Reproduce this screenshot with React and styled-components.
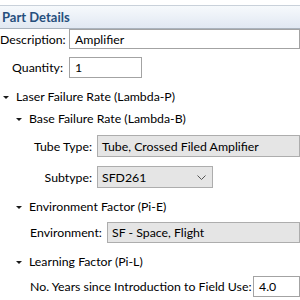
import React from "react";
import styled, { createGlobalStyle } from "styled-components";

const Global = createGlobalStyle`
  html, body { margin: 0; padding: 0; background: #ffffff; overflow: hidden; }
  body { font-family: "Segoe UI", Lato, "Noto Sans", sans-serif; font-size: 12.3px; color: #000; }
`;

const Page = styled.div`
  width: 300px;
  height: 300px;
  padding-top: 5px;
  box-sizing: border-box;
  overflow: hidden;
`;

const Header = styled.div`
  height: 24px;
  box-sizing: border-box;
  border-top: 1px solid #c9d1da;
  border-bottom: 1px solid #aab3bd;
  background: linear-gradient(#f6f9fc, #e1e8f2);
  display: flex;
  align-items: center;
  padding-left: 2px;
  font-weight: 700;
  font-size: 13px;
  color: #264f7d;
`;

const Row = styled.div`
  display: flex;
  align-items: center;
  margin-top: ${(p) => p.$mt || 0}px;
  margin-left: ${(p) => p.$indent || 0}px;
  height: ${(p) => p.$h || 21}px;
`;

const Label = styled.label`
  width: ${(p) => p.$w}px;
  text-align: ${(p) => (p.$left ? "left" : "right")};
  white-space: nowrap;
  flex: none;
`;

const TextBox = styled.div`
  box-sizing: border-box;
  height: 100%;
  margin-left: ${(p) => p.$gap || 6}px;
  width: ${(p) => (p.$w ? `${p.$w}px` : "auto")};
  flex: ${(p) => (p.$w ? "none" : "1 0 auto")};
  border: 1px solid #a3a3a3;
  background: #fff;
  display: flex;
  align-items: center;
  padding-left: 5px;
  white-space: nowrap;
`;

const Combo = styled.div`
  box-sizing: border-box;
  height: 100%;
  margin-left: ${(p) => p.$gap || 5}px;
  width: ${(p) => (p.$w ? `${p.$w}px` : "auto")};
  flex: ${(p) => (p.$w ? "none" : "1 0 auto")};
  border: 1px solid #adadad;
  background: #e5e5e5;
  display: flex;
  align-items: center;
  justify-content: space-between;
  padding: 0 6px 0 4px;
  white-space: nowrap;
`;

const Heading = styled.div`
  display: flex;
  align-items: center;
  height: 18px;
  margin-top: ${(p) => p.$mt || 0}px;
  padding-left: ${(p) => p.$indent}px;
  white-space: nowrap;
`;

const Triangle = styled.span`
  width: 0;
  height: 0;
  border-left: 3px solid transparent;
  border-right: 3px solid transparent;
  border-top: 3px solid #1a1a1a;
  margin-top: 3px;
  margin-right: 7px;
`;

const Chevron = () => (
  <svg width="9" height="5" viewBox="0 0 9 5">
    <path d="M0.5 0.5 L4.5 4.5 L8.5 0.5" fill="none" stroke="#555" strokeWidth="1" />
  </svg>
);

export default function App() {
  return (
    <Page>
      <Global />
      <Header>Part Details</Header>
      <Row $h={20}>
        <Label $w={63}>Description:</Label>
        <TextBox>Amplifier</TextBox>
      </Row>
      <Row $mt={8}>
        <Label $w={63}>Quantity:</Label>
        <TextBox $w={73}>1</TextBox>
      </Row>
      <Heading $mt={9} $indent={3}>
        <Triangle />
        Laser Failure Rate (Lambda-P)
      </Heading>
      <Heading $mt={4} $indent={16}>
        <Triangle />
        Base Failure Rate (Lambda-B)
      </Heading>
      <Row $h={22} $mt={8}>
        <Label $w={92}>Tube Type:</Label>
        <Combo>Tube, Crossed Filed Amplifier</Combo>
      </Row>
      <Row $h={22} $mt={9}>
        <Label $w={92}>Subtype:</Label>
        <Combo $w={116}>
          SFD261
          <Chevron />
        </Combo>
      </Row>
      <Heading $mt={9} $indent={16}>
        <Triangle />
        Environment Factor (Pi-E)
      </Heading>
      <Row $h={21} $mt={7} $indent={30}>
        <Label $w={71} $left>Environment:</Label>
        <Combo $gap={6}>SF - Space, Flight</Combo>
      </Row>
      <Heading $mt={9} $indent={16}>
        <Triangle />
        Learning Factor (Pi-L)
      </Heading>
      <Row $h={21} $mt={6} $indent={30}>
        <Label $w={218} $left>No. Years since Introduction to Field Use:</Label>
        <TextBox $gap={5}>4.0</TextBox>
      </Row>
    </Page>
  );
}
